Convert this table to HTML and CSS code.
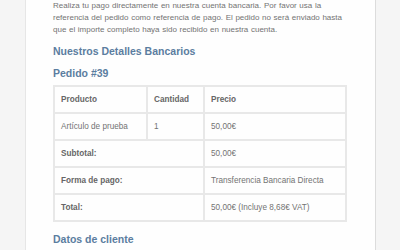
FILE: index.html
```html
<!DOCTYPE html>
<html lang="es">
<head>
<meta charset="utf-8">
<title>Pedido #39</title>
<link rel="stylesheet" href="styles.css">
</head>
<body>
<div class="page">
  <div class="card">
    <p class="intro">Realiza tu pago directamente en nuestra cuenta bancaria. Por favor usa la referencia del pedido como referencia de pago. El pedido no será enviado hasta que el importe completo haya sido recibido en nuestra cuenta.</p>
    <h2 class="heading heading-bank">Nuestros Detalles Bancarios</h2>
    <h2 class="heading heading-order">Pedido #39</h2>
    <table class="order">
      <thead>
        <tr>
          <th class="c1">Producto</th>
          <th class="c2">Cantidad</th>
          <th class="c3">Precio</th>
        </tr>
      </thead>
      <tbody>
        <tr>
          <td>Artículo de prueba</td>
          <td>1</td>
          <td>50,00€</td>
        </tr>
      </tbody>
      <tfoot>
        <tr>
          <th colspan="2">Subtotal:</th>
          <td>50,00€</td>
        </tr>
        <tr>
          <th colspan="2">Forma de pago:</th>
          <td>Transferencia Bancaria Directa</td>
        </tr>
        <tr>
          <th colspan="2">Total:</th>
          <td>50,00€ (Incluye 8,68€ VAT)</td>
        </tr>
      </tfoot>
    </table>
    <h2 class="heading heading-customer">Datos de cliente</h2>
  </div>
</div>
</body>
</html>
```
FILE: styles.css
```css
html, body {
  margin: 0;
  padding: 0;
  height: 100%;
  overflow: hidden;
  background: #f5f5f5;
}

body {
  font-family: "Liberation Sans", Arial, sans-serif;
  color: #737373;
}

.page {
  display: flex;
  padding-left: 25px;
  height: 100%;
}

.card {
  background: #fefefe;
  border-left: 1px solid #e6e6e6;
  border-right: 1px solid #dcdcdc;
  padding: 0 28px 0 27px;
  width: 294px;
}

.intro {
  margin: 0;
  font-size: 8px;
  line-height: 12px;
  word-spacing: 0.4px;
}

.heading {
  margin: 0;
  font-size: 10.5px;
  line-height: 14px;
  font-weight: bold;
  color: #5b7da0;
}

.heading-bank {
  margin-top: 8px;
}

.heading-order {
  margin-top: 8px;
}

.heading-customer {
  margin-top: 10px;
}

.order {
  margin-top: 5px;
  width: 294px;
  border-collapse: collapse;
  font-size: 8.2px;
  line-height: 10px;
}

.order th,
.order td {
  border: 2px solid #e8e8e8;
  padding: 7.5px 6px;
  text-align: left;
  vertical-align: middle;
}

.order th {
  font-weight: bold;
  color: #666;
}

.order .c1 { width: 79px; }
.order .c2 { width: 43px; }
```
